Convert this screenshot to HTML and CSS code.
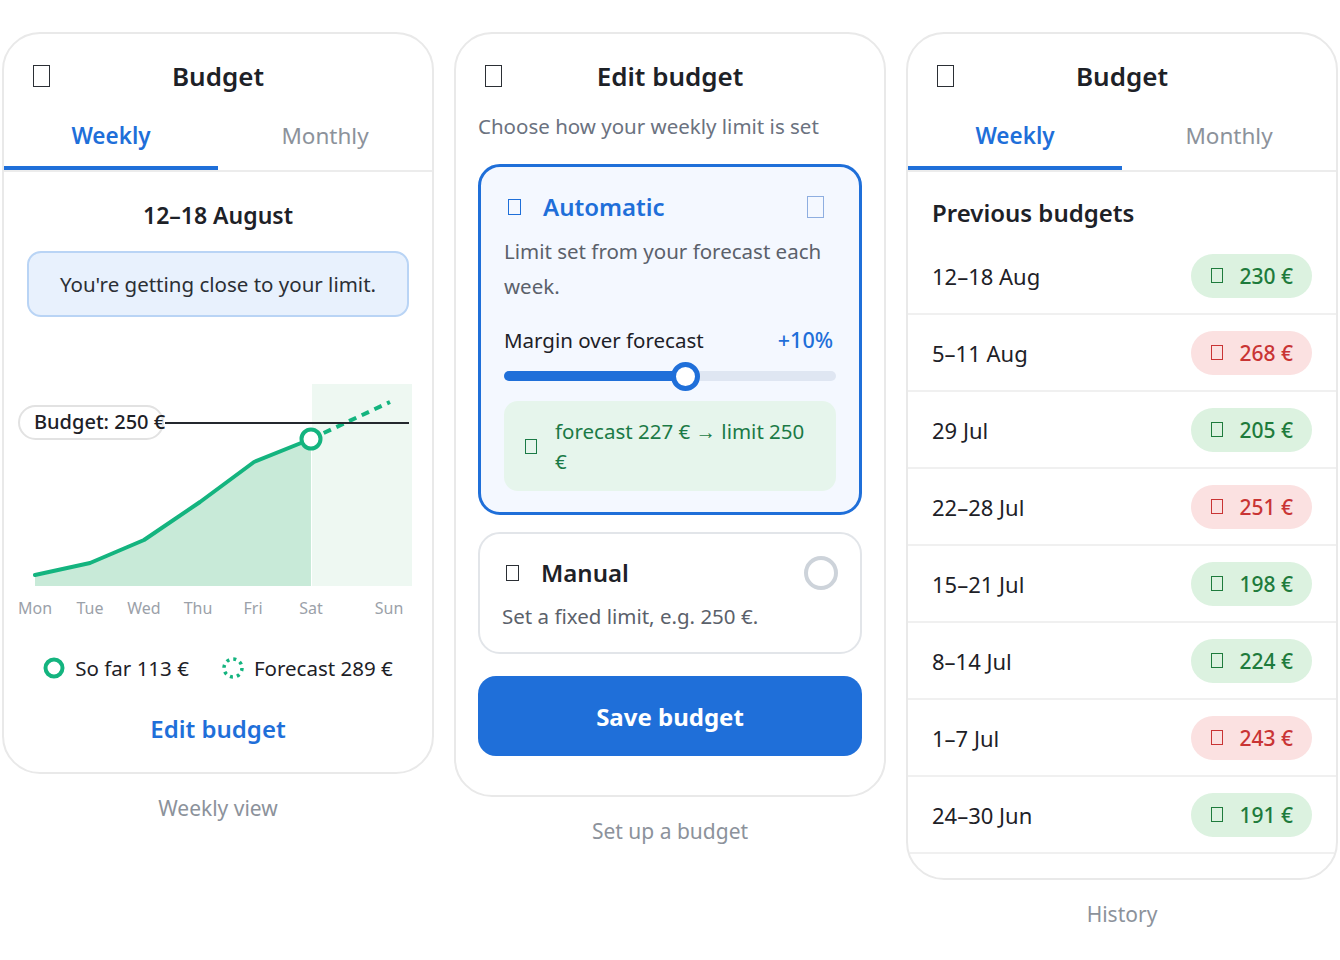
FILE: index.html
```html
<!DOCTYPE html>
<html lang="en">
<head>
    <meta charset="UTF-8">
    <meta name="viewport" content="width=device-width, initial-scale=1.0">
    <title>Budget</title>
    <link rel="stylesheet" href="styles.css">
</head>
<body>
    <main class="board">

        <!-- weekly overview -->
        <figure class="screen">
            <section class="phone">
                <header class="bar">
                    <span class="glyph glyph-head"></span>
                    <h2>Budget</h2>
                </header>
                <nav class="tabs">
                    <a class="tab active">Weekly</a>
                    <a class="tab">Monthly</a>
                </nav>
                <div class="week">
                    <h3 class="week-title">12–18 August</h3>
                    <p class="alert">You're getting close to your limit.</p>

                    <svg class="chart" width="402" height="250" viewBox="0 0 402 250">
                        <rect class="chart-future" x="295" y="12" width="100" height="202"/>
                        <path class="chart-area" d="M18,203 L73,191 L127,168 L183,130 L237,90 L294,67 L294,214 L18,214 Z"/>
                        <path class="chart-line" d="M18,203 L73,191 L127,168 L183,130 L237,90 L294,67"/>
                        <path class="chart-forecast" d="M294,67 L373,30"/>
                        <line class="chart-limit" x1="148" y1="51" x2="392" y2="51"/>
                        <rect class="chart-pill" x="2" y="34" width="144" height="33" rx="16.5"/>
                        <text class="chart-pill-text" x="17" y="57">Budget: 250 €</text>
                        <circle class="chart-dot" cx="294" cy="67" r="9.5"/>
                        <g class="chart-days">
                            <text x="18" y="242">Mon</text>
                            <text x="73" y="242">Tue</text>
                            <text x="127" y="242">Wed</text>
                            <text x="181" y="242">Thu</text>
                            <text x="236" y="242">Fri</text>
                            <text x="294" y="242">Sat</text>
                            <text x="372" y="242">Sun</text>
                        </g>
                    </svg>

                    <div class="legend">
                        <span class="legend-item">
                            <svg width="22" height="22" viewBox="0 0 22 22"><circle cx="11" cy="11" r="8.5" fill="none" stroke="#14b47f" stroke-width="4"/></svg>
                            So far 113 €
                        </span>
                        <span class="legend-item">
                            <svg width="22" height="22" viewBox="0 0 22 22"><circle cx="11" cy="11" r="9" fill="none" stroke="#14b47f" stroke-width="3.5" stroke-dasharray="3 4.07"/></svg>
                            Forecast 289 €
                        </span>
                    </div>
                    <a class="link">Edit budget</a>
                </div>
            </section>
            <figcaption>Weekly view</figcaption>
        </figure>

        <!-- edit form -->
        <figure class="screen">
            <section class="phone">
                <header class="bar">
                    <span class="glyph glyph-head"></span>
                    <h2>Edit budget</h2>
                </header>
                <div class="edit">
                    <p class="hint">Choose how your weekly limit is set</p>

                    <div class="option selected">
                        <div class="option-head">
                            <span class="glyph glyph-sm"></span>
                            <h4>Automatic</h4>
                            <span class="glyph glyph-check"></span>
                        </div>
                        <p class="option-text">Limit set from your forecast each week.</p>
                        <div class="margin-row">
                            <span>Margin over forecast</span>
                            <strong>+10%</strong>
                        </div>
                        <div class="slider" style="--value: 54.8%">
                            <div class="slider-fill"></div>
                            <div class="slider-thumb"></div>
                        </div>
                        <div class="calc">
                            <span class="glyph glyph-sm"></span>
                            <span>forecast 227 € → limit 250 €</span>
                        </div>
                    </div>

                    <div class="option">
                        <div class="option-head">
                            <span class="glyph glyph-sm"></span>
                            <h4>Manual</h4>
                            <span class="radio"></span>
                        </div>
                        <p class="option-text">Set a fixed limit, e.g. 250 €.</p>
                    </div>

                    <button class="save">Save budget</button>
                </div>
            </section>
            <figcaption>Set up a budget</figcaption>
        </figure>

        <!-- history -->
        <figure class="screen">
            <section class="phone">
                <header class="bar">
                    <span class="glyph glyph-head"></span>
                    <h2>Budget</h2>
                </header>
                <nav class="tabs">
                    <a class="tab active">Weekly</a>
                    <a class="tab">Monthly</a>
                </nav>
                <h3 class="history-title">Previous budgets</h3>
                <ul class="history">
                    <li><span>12–18 Aug</span><span class="pill ok"><span class="glyph glyph-sm"></span>230 €</span></li>
                    <li><span>5–11 Aug</span><span class="pill over"><span class="glyph glyph-sm"></span>268 €</span></li>
                    <li><span>29 Jul</span><span class="pill ok"><span class="glyph glyph-sm"></span>205 €</span></li>
                    <li><span>22–28 Jul</span><span class="pill over"><span class="glyph glyph-sm"></span>251 €</span></li>
                    <li><span>15–21 Jul</span><span class="pill ok"><span class="glyph glyph-sm"></span>198 €</span></li>
                    <li><span>8–14 Jul</span><span class="pill ok"><span class="glyph glyph-sm"></span>224 €</span></li>
                    <li><span>1–7 Jul</span><span class="pill over"><span class="glyph glyph-sm"></span>243 €</span></li>
                    <li><span>24–30 Jun</span><span class="pill ok"><span class="glyph glyph-sm"></span>191 €</span></li>
                </ul>
            </section>
            <figcaption>History</figcaption>
        </figure>

    </main>
</body>
</html>
```

FILE: styles.css
```css
:root {
    --blue : #1f6fd9;
    --text : #1d2127;
    --muted : #8c929b;
    --green : #14b47f;
    --line : #e9e9e9;
}

* {
    box-sizing: border-box;
}

body {
    margin: 0;
    background: #fff;
    color: var(--text);
    font-family: "Noto Sans", sans-serif;
}

h2, h3, h4, p, ul, figure {
    margin: 0;
    padding: 0;
}

.board {
    display: flex;
    align-items: flex-start;
    gap: 20px;
    padding: 32px 2px 0;
}

.screen {
    flex: 1;
    display: flex;
    flex-direction: column;
}

.phone {
    border: 2px solid var(--line);
    border-radius: 38px;
    background: #fff;
    overflow: hidden;
}

figcaption {
    margin-top: 19px;
    line-height: 30px;
    text-align: center;
    font-size: 21px;
    color: var(--muted);
}

/* missing icon glyphs, drawn as empty boxes */
.glyph {
    display: inline-block;
    flex: none;
    border: 1.5px solid currentColor;
}

.glyph-head {
    width: 17px;
    height: 22px;
    color: #2b2f35;
}

.glyph-sm {
    width: 13px;
    height: 16px;
}

.glyph-check {
    width: 17px;
    height: 22px;
    margin-left: auto;
    margin-right: 12px;
    color: #8eaee0;
}

/* top bar */
.bar {
    display: grid;
    grid-template-columns: 1fr auto 1fr;
    align-items: center;
    padding: 20px 29px 0;
}

.bar h2 {
    font-size: 26px;
    line-height: 44px;
    font-weight: 600;
}

.tabs {
    display: flex;
    border-bottom: 2px solid #ececec;
}

.tab {
    flex: 1;
    text-align: center;
    font-size: 22.5px;
    line-height: 32px;
    padding: 22px 0 14px;
    border-bottom: 4px solid transparent;
    color: var(--muted);
}

.tab.active {
    color: var(--blue);
    font-weight: 600;
    border-bottom-color: var(--blue);
}

/* weekly view */
.week {
    display: flex;
    flex-direction: column;
    align-items: center;
    padding: 0 23px 26px;
}

.week-title {
    margin-top: 26px;
    font-size: 23px;
    line-height: 34px;
    font-weight: 600;
}

.alert {
    align-self: stretch;
    margin-top: 19px;
    padding: 16px 10px;
    border: 2px solid #b9d4f5;
    border-radius: 14px;
    background: #e8f1fd;
    text-align: center;
    font-size: 20.5px;
    line-height: 30px;
    color: #2b2f35;
}

.chart {
    display: block;
    margin: 55px -10px 0;
    overflow: visible;
}

.chart-future {
    fill: #eef8f2;
}

.chart-area {
    fill: #c8ead8;
}

.chart-line {
    fill: none;
    stroke: var(--green);
    stroke-width: 4;
    stroke-linejoin: round;
    stroke-linecap: round;
}

.chart-forecast {
    fill: none;
    stroke: var(--green);
    stroke-width: 4;
    stroke-dasharray: 8 6;
}

.chart-limit {
    stroke: #24282e;
    stroke-width: 2;
}

.chart-pill {
    fill: #fff;
    stroke: #e2e2e2;
    stroke-width: 2;
}

.chart-pill-text {
    font-size: 20px;
    font-weight: 500;
    fill: var(--text);
}

.chart-dot {
    fill: #fff;
    stroke: var(--green);
    stroke-width: 4;
}

.chart-days text {
    font-size: 16px;
    fill: #9ba1a9;
    text-anchor: middle;
}

.legend {
    display: flex;
    gap: 33px;
    margin-top: 31px;
    font-size: 20.5px;
    line-height: 30px;
}

.legend-item {
    display: flex;
    align-items: center;
    gap: 10px;
}

.link {
    margin-top: 29px;
    font-size: 24px;
    line-height: 34px;
    font-weight: 600;
    color: var(--blue);
}

/* edit view */
.edit {
    display: flex;
    flex-direction: column;
    padding: 0 22px 39px;
}

.hint {
    margin-top: 13px;
    font-size: 20.5px;
    line-height: 30px;
    color: #6b7280;
}

.option {
    margin-top: 17px;
    padding: 21px 22px 21px;
    border: 2px solid #e2e5e9;
    border-radius: 22px;
    background: #fff;
}

.option.selected {
    margin-top: 23px;
    padding: 22px 23px 21px;
    border: 3px solid var(--blue);
    background: #f4f8ff;
}

.option-head {
    display: flex;
    align-items: center;
    gap: 22px;
    line-height: 36px;
}

.option-head .glyph-sm {
    margin-left: 4px;
    color: #2b2f35;
}

.option-head h4 {
    font-size: 24px;
    font-weight: 600;
}

.selected .option-head .glyph-sm,
.selected .option-head h4 {
    color: var(--blue);
}

.option-text {
    margin-top: 10px;
    font-size: 20.5px;
    line-height: 30px;
    color: #5b616b;
}

.selected .option-text {
    margin-top: 9px;
    line-height: 35px;
}

.radio {
    width: 34px;
    height: 34px;
    margin-left: auto;
    border: 4px solid #cdd3da;
    border-radius: 50%;
}

.margin-row {
    display: flex;
    justify-content: space-between;
    margin-top: 21px;
    padding-right: 3px;
    font-size: 20.5px;
    line-height: 30px;
}

.margin-row strong {
    font-weight: 500;
    font-size: 21.5px;
    color: var(--blue);
}

.slider {
    position: relative;
    height: 10px;
    margin: 16px 0 20px;
    border-radius: 5px;
    background: #dfe6f2;
}

.slider-fill {
    width: var(--value);
    height: 100%;
    border-radius: 5px;
    background: var(--blue);
}

.slider-thumb {
    position: absolute;
    top: 50%;
    left: var(--value);
    width: 29px;
    height: 29px;
    margin: -14.5px 0 0 -14.5px;
    border: 5px solid var(--blue);
    border-radius: 50%;
    background: #fff;
}

.calc {
    display: flex;
    align-items: center;
    gap: 18px;
    padding: 15px 20px 15px 21px;
    border-radius: 14px;
    background: #e6f5ec;
    color: #1b7a46;
    font-size: 20.5px;
    line-height: 30px;
}

.calc .glyph-sm {
    width: 12px;
    height: 15px;
}

.save {
    margin-top: 22px;
    height: 80px;
    border: none;
    border-radius: 18px;
    background: var(--blue);
    color: #fff;
    font-family: inherit;
    font-size: 24px;
    font-weight: 700;
}

/* history */
.history-title {
    margin-top: 24px;
    padding: 0 24px;
    font-size: 24px;
    line-height: 34px;
    font-weight: 600;
}

.history {
    list-style: none;
    margin-top: 8px;
    padding-bottom: 24px;
}

.history li {
    display: flex;
    align-items: center;
    justify-content: space-between;
    padding: 15.5px 24px;
    border-bottom: 2px solid #f0f0f0;
    font-size: 22px;
}

.pill {
    display: flex;
    align-items: center;
    gap: 16px;
    height: 44px;
    padding: 0 19px 0 20px;
    border-radius: 22px;
    font-size: 21px;
    font-weight: 500;
}

.pill .glyph-sm {
    width: 12px;
    height: 15px;
    border-width: 1px;
}

.pill.ok {
    background: #dcf2e0;
    color: #1e7b3c;
}

.pill.over {
    background: #fbe1e1;
    color: #c93434;
}
```
